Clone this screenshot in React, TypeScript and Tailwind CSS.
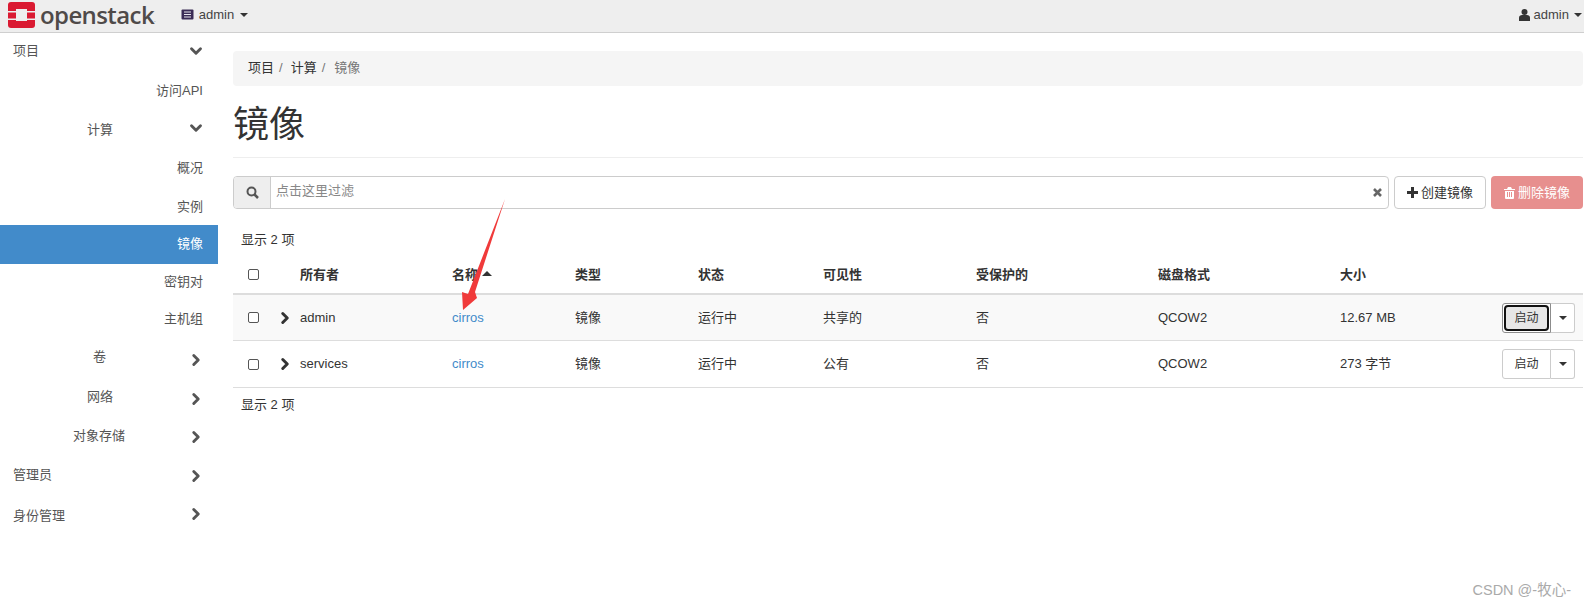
import React from 'react';
import { ChevronDown, ChevronRight } from 'lucide-react';

const FONT = "font-['Liberation_Sans','Noto_Sans_CJK_SC',sans-serif]";

const Caret = ({ className = '' }: { className?: string }) => (
  <span className={`inline-block w-0 h-0 border-x-4 border-x-transparent border-t-4 border-t-[#333] ${className}`} />
);

const navRows = [
  { label: '项目', pr: 'top', open: true, text: '-mt-[2px]' },
  { label: '访问API', pr: 'leaf', text: 'mt-[2px]' },
  { label: '计算', pr: 'group', open: true, text: 'mt-[2px]' },
  { label: '概况', pr: 'leaf', text: 'mt-[2px]' },
  { label: '实例', pr: 'leaf', text: 'mt-[2px]' },
  { label: '镜像', pr: 'leaf', active: true, text: '-mt-[2px]' },
  { label: '密钥对', pr: 'leaf', text: '-mt-[2px]' },
  { label: '主机组', pr: 'leaf', text: '-mt-[6px]' },
  { label: '卷', pr: 'group', pad: 'pl-[93px]', text: '-mt-[6px]' },
  { label: '网络', pr: 'group', pad: 'pl-[87px]', text: '-mt-[4px]' },
  { label: '对象存储', pr: 'group', pad: 'pl-[73px]', text: '-mt-[2px]' },
  { label: '管理员', pr: 'top', text: '-mt-[2px]' },
  { label: '身份管理', pr: 'top', text: 'mt-[2px]' },
];

const Sidebar = () => (
  <div className="w-[218px] shrink-0 -mt-[1px]">
    {navRows.map((r) => (
      <div
        key={r.label}
        className={`h-[38.6px] flex items-center text-[13px] ${r.active ? 'bg-[#428bca] text-white' : 'text-[#555]'} ${
          r.pr === 'leaf' ? 'justify-end pr-[15px]' : r.pr === 'top' ? 'pl-[13px] justify-between pr-[13px]' : `${r.pad ?? 'pl-[87px]'} justify-between pr-[13px]`
        }`}
      >
        <span className={r.text}>{r.label}</span>
        {r.pr !== 'leaf' &&
          (r.open ? (
            <ChevronDown size={18} strokeWidth={3.8} className="text-[#555]" />
          ) : (
            <ChevronRight size={18} strokeWidth={3.8} className="text-[#555]" />
          ))}
      </div>
    ))}
  </div>
);

const Checkbox = () => <span className="block w-[11px] h-[11px] border border-[#555] rounded-[2px] bg-white" />;

const COLS = 'grid grid-cols-[67px_152px_123px_123px_125px_153px_182px_182px_1fr] items-center';

const rows = [
  { owner: 'admin', vis: '共享的', size: '12.67 MB', focus: true, bg: 'bg-[#f9f9f9] h-[46px]' },
  { owner: 'services', vis: '公有', size: '273 字节', focus: false, bg: 'bg-white h-[47px]' },
];

const Row = ({ r }: { r: (typeof rows)[number] }) => (
  <div className={`${COLS} border-b border-[#ddd] ${r.bg}`}>
    <div className="flex items-center pl-[15px] gap-[18px]">
      <Checkbox />
      <ChevronRight size={18} strokeWidth={4} className="text-[#333] -ml-[1px]" />
    </div>
    <div>{r.owner}</div>
    <div className="text-[#428bca]">cirros</div>
    <div>镜像</div>
    <div>运行中</div>
    <div>{r.vis}</div>
    <div>否</div>
    <div>QCOW2</div>
    <div className="flex items-center justify-between pr-[8px]">
      <span>{r.size}</span>
      <span className="flex h-[30px]">
        {r.focus ? (
          <span className="w-[49px] flex rounded-l-[3px] border border-[#8c8c8c] bg-white p-[1px] text-[12px]">
            <span className="flex-1 flex items-center justify-center rounded-[4px] border-2 border-[#111] bg-[#e6e6e6]">启动</span>
          </span>
        ) : (
          <span className="w-[49px] flex items-center justify-center rounded-l-[3px] border border-[#ccc] bg-white text-[12px]">启动</span>
        )}
        <span className="w-[24px] flex items-center justify-center rounded-r-[3px] border border-l-0 border-[#ccc] bg-white">
          <Caret />
        </span>
      </span>
    </div>
  </div>
);

export default function App() {
  return (
    <div className={`relative w-[1584px] h-[609px] overflow-hidden bg-white text-[13px] text-[#333] ${FONT}`}>
      {/* top bar */}
      <div className="h-[33px] pb-[3px] bg-[#eeeeee] border-b border-[#cfcfcf] flex items-center">
        <svg width="27" height="26" viewBox="0 0 27 26" className="ml-[8px] shrink-0">
          <rect width="27" height="26" rx="3" fill="#da1a32" />
          <rect x="8" y="7" width="11" height="12" fill="#eeeeee" />
          <path d="M0 9h8v1.500H0zM0 16.500h8V18H0zM19 9h8v1.500h-8zM19 16.500h8V18h-8z" fill="#eeeeee" />
        </svg>
        <span className="ml-[5px] text-[24px] leading-[26px] font-semibold text-[#4f4a49] font-['Open_Sans',sans-serif] tracking-[-0.6px]">openstack</span>
        <span className="text-[6px] text-[#4f4a49] mt-[12px]">.</span>
        <span className="ml-[25px] flex items-center text-[#444]">
          <svg width="13" height="11" viewBox="0 0 13 11">
            <rect x="0.5" y="0.5" width="12" height="10" rx="1" fill="#3b2c55" />
            <path d="M3 3h7M3 5.500h7M3 8h7" stroke="#e8e6ee" strokeWidth="1" />
          </svg>
          <span className="ml-[5px]">admin</span>
          <Caret className="ml-[6px]" />
        </span>
        <span className="ml-auto mr-[2px] flex items-center text-[#444]">
          <svg width="11" height="12" viewBox="0 0 11 12">
            <circle cx="5.500" cy="3" r="3" fill="#333" />
            <path fill="#333" d="M0 12V8.500C0 7 1.500 6 3 6h5c1.500 0 3 1 3 2.500V12z" />
          </svg>
          <span className="ml-[4px]">admin</span>
          <Caret className="ml-[5px]" />
        </span>
      </div>

      <div className="flex">
        <Sidebar />

        <div className="ml-[15px] w-[1350px]">
          <div className="mt-[18px] h-[35px] pb-[2px] bg-[#f5f5f5] rounded-[4px] flex items-center pl-[15px]">
            <span>项目</span>
            <span className="text-[#777] ml-[5px] mr-[8px]">/</span>
            <span>计算</span>
            <span className="text-[#777] ml-[5px] mr-[9px]">/</span>
            <span className="text-[#777]">镜像</span>
          </div>

          <h1 className="mt-[19px] text-[36px] leading-[40px] text-[#333]">镜像</h1>
          <div className="mt-[12px] border-t border-[#eee]" />

          <div className="mt-[18px] flex h-[33px]">
            <div className="flex-1 flex border border-[#ccc] rounded-[4px]">
              <div className="w-[37px] bg-[#eee] border-r border-[#ccc] rounded-l-[3px] flex items-center justify-center">
                <svg width="13" height="13" viewBox="0 0 13 13" fill="none" stroke="#555" strokeWidth="2">
                  <circle cx="5.500" cy="5.500" r="4" />
                  <path d="M8.500 8.500L12 12" strokeWidth="2.500" />
                </svg>
              </div>
              <div className="flex-1 flex items-center pl-[5px] pr-[6px] justify-between text-[#888]">
                <span className="-mt-[3px]">点击这里过滤</span>
                <svg width="9" height="9" viewBox="0 0 9 9" stroke="#666" strokeWidth="2.600">
                  <path d="M1 1l7 7M8 1l-7 7" />
                </svg>
              </div>
            </div>
            <div className="ml-[5px] w-[92px] border border-[#ccc] rounded-[4px] flex items-center justify-center">
              <svg width="11" height="11" viewBox="0 0 11 11" fill="#333">
                <path d="M4 0h3v4h4v3H7v4H4V7H0V4h4z" />
              </svg>
              <span className="ml-[3px]">创建镜像</span>
            </div>
            <div className="ml-[5px] w-[92px] bg-[#e78f8e] rounded-[4px] text-white flex items-center justify-center">
              <svg width="11" height="12" viewBox="0 0 11 12" fill="#fff">
                <path d="M4 0h3l1 2h3v1H0V2h3zM1 4h9v7a1 1 0 0 1-1 1H2a1 1 0 0 1-1-1zM3 5v5h1V5zM5 5v5h1V5zM7 5v5h1V5z" fillRule="evenodd" />
              </svg>
              <span className="ml-[3px]">删除镜像</span>
            </div>
          </div>

          <div className="mt-[22px] pl-[8px] leading-[18px]">显示 2 项</div>

          <div className={`${COLS} h-[39px] mt-[7px] font-bold text-[#333] border-b-2 border-[#ddd]`}>
            <div className="pl-[15px]">
              <Checkbox />
            </div>
            <div>所有者</div>
            <div className="flex items-center gap-[4px]">
              名称
              <span className="inline-block w-0 h-0 -mt-[3px] border-x-[5px] border-x-transparent border-b-[5px] border-b-[#333]" />
            </div>
            <div>类型</div>
            <div>状态</div>
            <div>可见性</div>
            <div>受保护的</div>
            <div>磁盘格式</div>
            <div>大小</div>
          </div>

          {rows.map((r) => (
            <Row key={r.owner} r={r} />
          ))}

          <div className="mt-[8px] pl-[8px] leading-[18px]">显示 2 项</div>
        </div>
      </div>

      {/* annotation arrow drawn over the screenshot */}
      <svg className="absolute left-[455px] top-[195px]" width="55" height="120" viewBox="0 0 55 120">
        <path fill="#f03a3a" d="M50 4L20 97 22 103 8 115 7 97 13 99z" />
      </svg>

      <div className="absolute right-[13px] bottom-[7px] text-[14.5px] text-[#aaa]">CSDN @-牧心-</div>
    </div>
  );
}
